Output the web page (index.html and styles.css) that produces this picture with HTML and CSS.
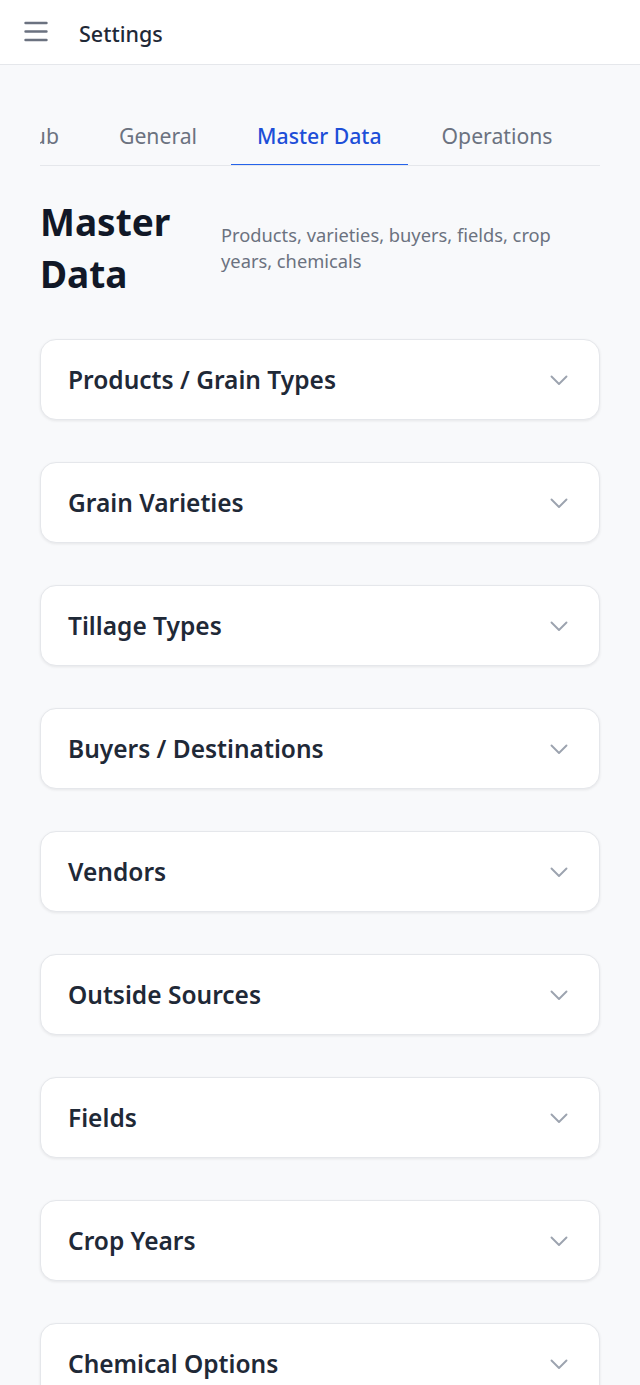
FILE: index.html
```
<!DOCTYPE html>
<html lang="en">
<head>
<meta charset="utf-8">
<title>Settings</title>
<link rel="stylesheet" href="styles.css">
</head>
<body>
<header class="topbar">
  <button class="menu-btn" aria-label="Menu">
    <svg width="24" height="24" viewBox="0 0 24 24" fill="none" stroke="#6b7280" stroke-width="2.4" stroke-linecap="round"><path d="M1.5 3h21M1.5 11.5h21M1.5 20h21"/></svg>
  </button>
  <span class="topbar-title">Settings</span>
</header>
<main class="content">
  <nav class="tabs">
    <div class="tab-strip">
      <a class="tab">Club</a>
      <a class="tab">General</a>
      <a class="tab active">Master Data</a>
      <a class="tab">Operations</a>
    </div>
  </nav>
  <section class="section-head">
    <h1 class="section-title">Master Data</h1>
    <p class="section-desc">Products, varieties, buyers, fields, crop years, chemicals</p>
  </section>
  <div class="cards">
    <div class="card"><span class="card-title">Products / Grain Types</span><svg class="chev" width="20" height="20" viewBox="0 0 20 20" fill="none" stroke="#9ca3af" stroke-width="1.9" stroke-linecap="round" stroke-linejoin="round"><path d="M2.5 6.5l7.5 7.5 7.5-7.5"/></svg></div>
    <div class="card"><span class="card-title">Grain Varieties</span><svg class="chev" width="20" height="20" viewBox="0 0 20 20" fill="none" stroke="#9ca3af" stroke-width="1.9" stroke-linecap="round" stroke-linejoin="round"><path d="M2.5 6.5l7.5 7.5 7.5-7.5"/></svg></div>
    <div class="card"><span class="card-title">Tillage Types</span><svg class="chev" width="20" height="20" viewBox="0 0 20 20" fill="none" stroke="#9ca3af" stroke-width="1.9" stroke-linecap="round" stroke-linejoin="round"><path d="M2.5 6.5l7.5 7.5 7.5-7.5"/></svg></div>
    <div class="card"><span class="card-title">Buyers / Destinations</span><svg class="chev" width="20" height="20" viewBox="0 0 20 20" fill="none" stroke="#9ca3af" stroke-width="1.9" stroke-linecap="round" stroke-linejoin="round"><path d="M2.5 6.5l7.5 7.5 7.5-7.5"/></svg></div>
    <div class="card"><span class="card-title">Vendors</span><svg class="chev" width="20" height="20" viewBox="0 0 20 20" fill="none" stroke="#9ca3af" stroke-width="1.9" stroke-linecap="round" stroke-linejoin="round"><path d="M2.5 6.5l7.5 7.5 7.5-7.5"/></svg></div>
    <div class="card"><span class="card-title">Outside Sources</span><svg class="chev" width="20" height="20" viewBox="0 0 20 20" fill="none" stroke="#9ca3af" stroke-width="1.9" stroke-linecap="round" stroke-linejoin="round"><path d="M2.5 6.5l7.5 7.5 7.5-7.5"/></svg></div>
    <div class="card"><span class="card-title">Fields</span><svg class="chev" width="20" height="20" viewBox="0 0 20 20" fill="none" stroke="#9ca3af" stroke-width="1.9" stroke-linecap="round" stroke-linejoin="round"><path d="M2.5 6.5l7.5 7.5 7.5-7.5"/></svg></div>
    <div class="card"><span class="card-title">Crop Years</span><svg class="chev" width="20" height="20" viewBox="0 0 20 20" fill="none" stroke="#9ca3af" stroke-width="1.9" stroke-linecap="round" stroke-linejoin="round"><path d="M2.5 6.5l7.5 7.5 7.5-7.5"/></svg></div>
    <div class="card"><span class="card-title">Chemical Options</span><svg class="chev" width="20" height="20" viewBox="0 0 20 20" fill="none" stroke="#9ca3af" stroke-width="1.9" stroke-linecap="round" stroke-linejoin="round"><path d="M2.5 6.5l7.5 7.5 7.5-7.5"/></svg></div>
  </div>
</main>
</body>
</html>
```
FILE: styles.css
```
* { box-sizing: border-box; }
html, body { margin: 0; padding: 0; }
body {
  font-family: "Noto Sans", "Open Sans", sans-serif;
  background: #f8f9fb;
  color: #111827;
  height: 1385px;
  overflow: hidden;
}
.topbar {
  height: 65px;
  background: #ffffff;
  border-bottom: 1px solid #e5e7eb;
  display: flex;
  align-items: center;
  padding-left: 24px;
}
.menu-btn {
  border: 0;
  background: none;
  padding: 0;
  width: 24px;
  height: 24px;
  display: flex;
}
.menu-btn svg { display: block; }
.topbar-title {
  margin-left: 31px;
  font-size: 21.5px;
  font-weight: 500;
  color: #1f2937;
  margin-top: 2px;
}
.content {
  padding: 0 40px;
}
.tabs {
  margin-top: 41px;
  border-bottom: 1px solid #e5e7eb;
  overflow: hidden;
}
.tab-strip {
  display: flex;
  gap: 8px;
  margin-left: -52px;
  white-space: nowrap;
}
.tab {
  padding: 14px 26px 12px;
  font-size: 21.2px;
  line-height: 32px;
  color: #6b7280;
  border-bottom: 2px solid transparent;
  margin-bottom: -1px;
}
.tab.active {
  color: #1d4ed8;
  font-weight: 500;
  border-bottom-color: #2563eb;
}
.section-head {
  display: flex;
  align-items: center;
  margin-top: 30px;
}
.section-title {
  flex: 0 0 181px;
  margin: 0;
  font-size: 37px;
  line-height: 52px;
  font-weight: 700;
  color: #111827;
}
.section-desc {
  margin: 0;
  font-size: 18.3px;
  line-height: 26px;
  color: #6b7280;
}
.cards {
  margin-top: 39px;
  display: flex;
  flex-direction: column;
  gap: 42px;
}
.card {
  height: 81px;
  background: #ffffff;
  border: 1px solid #e5e7eb;
  border-radius: 16px;
  box-shadow: 0 1px 3px rgba(0,0,0,0.08);
  display: flex;
  align-items: center;
  justify-content: space-between;
  padding: 0 30px 0 27px;
}
.card-title {
  font-size: 24.5px;
  font-weight: 600;
  color: #1f2937;
}
.chev { display: block; }
```
